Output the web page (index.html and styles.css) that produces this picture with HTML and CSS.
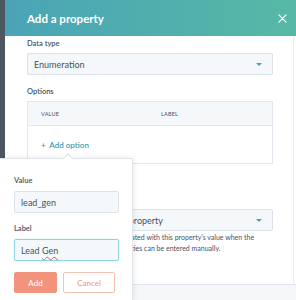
FILE: index.html
```html
<!DOCTYPE html>
<html lang="en">
<head>
    <meta charset="UTF-8">
    <meta name="viewport" content="width=device-width, initial-scale=1.0">
    <title>Add a property</title>
    <link rel="stylesheet" href="styles.css">
</head>
<body>
    <div class="app">
        <div class="rail"></div>
        <div class="panel">
            <div class="header">
                <h2>Add a property</h2>
                <svg class="close" width="9" height="9" viewBox="0 0 10 10">
                    <path d="M1 1 L9 9 M9 1 L1 9" stroke="#fff" stroke-width="1.4" stroke-linecap="round"/>
                </svg>
            </div>
            <div class="content">
                <div class="label">Data type</div>
                <div class="select">
                    <span>Enumeration</span>
                    <span class="caret"></span>
                </div>

                <div class="label options-label">Options</div>
                <div class="options">
                    <div class="options-head">
                        <span class="col-value">VALUE</span>
                        <span>LABEL</span>
                    </div>
                    <div class="options-body">
                        <span class="add-option">+&nbsp; Add option</span>
                    </div>
                </div>

                <div class="label field-label">Field type</div>
                <div class="select">
                    <span>Synced with an existing property</span>
                    <span class="caret"></span>
                </div>
                <p class="help">New contact records will be populated with this property's value when the<br>the values of other contact properties can be entered manually.</p>
            </div>
            <div class="footer"></div>
        </div>
    </div>

    <div class="popover">
        <div class="arrow"></div>
        <div class="label">Value</div>
        <div class="input"><span>lead_gen</span></div>
        <div class="label pop-label">Label</div>
        <div class="input focused"><span>Lead <span class="typo">Gen</span></span></div>
        <div class="buttons">
            <button class="btn-add">Add</button>
            <button class="btn-cancel">Cancel</button>
        </div>
    </div>
</body>
</html>
```

FILE: styles.css
```css
* {
    box-sizing: border-box;
}
body {
    margin: 0;
    width: 296px;
    height: 300px;
    overflow: hidden;
    font-family: Lato, "Open Sans", sans-serif;
    color: #3f5366;
    position: relative;
}
.app {
    display: flex;
    height: 300px;
}
.rail {
    width: 5px;
    background: #4c5762;
}
.panel {
    flex: 1;
    display: flex;
    flex-direction: column;
}
.header {
    height: 36px;
    flex-shrink: 0;
    background: linear-gradient(to right, #4aa4b7, #56b9a5);
    display: flex;
    align-items: center;
    justify-content: space-between;
    padding: 0 9px 0 22px;
}
.header h2 {
    margin: 0;
    color: #fff;
    font-size: 11.5px;
    font-weight: 700;
}
.content {
    height: 248px;
    background: #fff;
    padding: 3px 20px 0 22px;
    border-right: 1px solid #e9edf2;
    margin-right: 2px;
}
.footer {
    height: 16px;
    flex-shrink: 0;
    background: #f5f7f9;
    border-top: 1px solid #dfe4ea;
}
.label {
    font-size: 7.5px;
    font-weight: 600;
    line-height: 10px;
    margin-bottom: 4px;
}
.select {
    height: 22px;
    background: #f5f8fa;
    border: 1px solid #dbe2ea;
    border-radius: 2px;
    display: flex;
    align-items: center;
    justify-content: space-between;
    padding: 0 10px 0 6px;
    font-size: 9px;
}
.caret {
    width: 0;
    height: 0;
    border-left: 3px solid transparent;
    border-right: 3px solid transparent;
    border-top: 3.5px solid #4a9fb5;
}
.options-label {
    margin-top: 12px;
}
.options {
    height: 63px;
    border: 1px solid #e3e8ee;
}
.options-head {
    height: 24px;
    background: #f5f8fa;
    border-bottom: 1px solid #e3e8ee;
    display: flex;
    align-items: center;
    padding-left: 13px;
    font-size: 5.5px;
    letter-spacing: 0.2px;
}
.col-value {
    width: 120px;
}
.options-body {
    height: 37px;
    display: flex;
    align-items: center;
    padding-left: 13px;
}
.add-option {
    color: #3f9db4;
    font-size: 8px;
    font-weight: 600;
}
.field-label {
    margin-top: 26px;
    margin-bottom: 9px;
}
.help {
    margin: 1px 0 0;
    font-size: 7px;
    line-height: 11px;
    white-space: nowrap;
}
.popover {
    position: absolute;
    left: 0;
    top: 158px;
    width: 133px;
    height: 142px;
    background: #fff;
    border: 1px solid #e1e6eb;
    border-left: none;
    border-bottom: none;
    box-shadow: 0 1px 6px rgba(0, 0, 0, 0.12);
    padding: 17px 13px 0 14px;
}
.arrow {
    position: absolute;
    left: 64px;
    top: -4px;
    width: 8px;
    height: 8px;
    background: #fff;
    border-left: 1px solid #e1e6eb;
    border-top: 1px solid #e1e6eb;
    transform: rotate(45deg);
}
.popover .label {
    margin-bottom: 5px;
}
.popover .pop-label {
    margin-top: 11px;
}
.input {
    height: 22px;
    background: #f5f8fa;
    border: 1px solid #dbe2ea;
    border-radius: 2px;
    display: flex;
    align-items: center;
    padding-left: 6px;
    font-size: 9px;
}
.input.focused {
    border: 1px solid #8fd5e0;
    box-shadow: 0 0 2px #bde8ee;
}
.typo {
    text-decoration: underline wavy #e35a5a;
    text-decoration-thickness: 1px;
    text-underline-offset: 2px;
}
.buttons {
    display: flex;
    gap: 6px;
    margin-top: 11px;
}
button {
    height: 21px;
    font-family: inherit;
    font-size: 8px;
    border-radius: 2px;
    padding: 0;
}
.btn-add {
    width: 43px;
    background: #f2937b;
    border: 1px solid #f2937b;
    color: #fff;
}
.btn-cancel {
    width: 52px;
    background: #fff;
    border: 1px solid #f7c2b4;
    color: #f2937b;
}
```
